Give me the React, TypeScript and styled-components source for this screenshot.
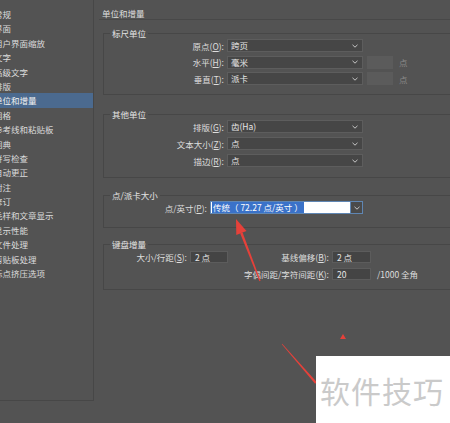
import React, { FC } from "react";
import styled, { createGlobalStyle } from "styled-components";

const GlobalStyle = createGlobalStyle`
  html, body {
    margin: 0;
    padding: 0;
    background: #535353;
  }
  body {
    font-family: "Noto Sans CJK SC", "Noto Sans", sans-serif;
  }
`;

const Page = styled.div`
  position: relative;
  display: flex;
  width: 450px;
  height: 423px;
  overflow: hidden;
  background: #535353;
  color: #dedede;
  font-size: 8.5px;
`;

const Sidebar = styled.div`
  width: 94px;
  height: 401px;
  padding-top: 7px;
  box-sizing: border-box;
  border-right: 1px solid #474747;
  border-bottom: 1px solid #474747;
  overflow: hidden;
  flex-shrink: 0;
`;

const SidebarItem = styled.div<{ $active?: boolean }>`
  height: 14.4px;
  line-height: 14.4px;
  white-space: nowrap;
  background: ${({ $active }) => ($active ? "#4b6a8f" : "transparent")};
  color: ${({ $active }) => ($active ? "#f2f2f2" : "#dcdcdc")};
  span {
    margin-left: -6px;
  }
`;

const Main = styled.div`
  flex: 1;
  padding-left: 5px;
  overflow: hidden;
`;

const Header = styled.div`
  padding: 7px 0 0 3px;
  line-height: 12px;
  height: 12px;
  border-bottom: 1px solid #484848;
  margin-right: -20px;
`;

const Group = styled.fieldset<{ $top: number; $bottom: number; $pt?: number }>`
  margin: ${({ $top }) => $top}px -20px 0 4px;
  padding: ${({ $pt }) => $pt ?? 1}px 0 ${({ $bottom }) => $bottom}px 0;
  border: 1px solid #474747;
  min-width: 0;
`;

const Legend = styled.legend`
  margin-left: 6px;
  padding: 0 2px;
  line-height: 10px;
  color: #e4e4e4;
`;

const Row = styled.div<{ $labelWidth: number; $gap?: number }>`
  display: flex;
  align-items: center;
  height: 13px;
  margin-bottom: ${({ $gap }) => $gap ?? 4}px;
  &:last-child {
    margin-bottom: 0;
  }
  label {
    width: ${({ $labelWidth }) => $labelWidth}px;
    text-align: right;
    margin-right: 3px;
    white-space: nowrap;
    flex-shrink: 0;
  }
`;

const SelectBox = styled.div<{ $width: number }>`
  display: flex;
  align-items: center;
  justify-content: space-between;
  width: ${({ $width }) => $width}px;
  height: 13px;
  box-sizing: border-box;
  padding: 0 4px 0 3px;
  background: #464646;
  border: 1px solid #5d5d5d;
  color: #e6e6e6;
  line-height: 11px;
`;

const FocusSelect = styled.div<{ $width: number }>`
  display: flex;
  width: ${({ $width }) => $width}px;
  height: 13px;
  box-sizing: border-box;
  border: 1px solid #5f86b3;
`;

const FocusField = styled.div`
  flex: 1;
  background: #ffffff;
  padding-left: 1px;
  display: flex;
  align-items: center;
`;

const Selection = styled.span`
  background: #3a72c9;
  color: #ffffff;
  line-height: 11px;
  padding: 0 1px;
  white-space: pre;
`;

const FocusButton = styled.div`
  width: 11px;
  display: flex;
  align-items: center;
  justify-content: center;
  background: #4a4a4a;
  border-left: 1px solid #5f86b3;
`;

const DisabledBox = styled.div`
  width: 26px;
  height: 13px;
  margin-left: 4px;
  background: #5b5b5b;
`;

const Unit = styled.span<{ $muted?: boolean }>`
  margin-left: ${({ $muted }) => ($muted ? 6 : 3)}px;
  color: ${({ $muted }) => ($muted ? "#8a8a8a" : "#dedede")};
  white-space: nowrap;
`;

const KeyGrid = styled.div`
  display: grid;
  grid-template-columns: 83px 38px 98px 39px auto;
  grid-auto-rows: 12px;
  column-gap: 3px;
  row-gap: 5px;
  align-items: center;
  label {
    text-align: right;
    white-space: nowrap;
  }
`;

const TextInput = styled.div`
  height: 12px;
  box-sizing: border-box;
  padding-left: 4px;
  background: #444444;
  border: 1px solid #5c5c5c;
  line-height: 10px;
  color: #e8e8e8;
`;

const Overlay = styled.svg`
  position: absolute;
  left: 0;
  top: 0;
  width: 450px;
  height: 423px;
  pointer-events: none;
`;

const Watermark = styled.div`
  position: absolute;
  left: 316px;
  top: 356px;
  width: 134px;
  height: 67px;
  background: #ffffff;
  display: flex;
  align-items: center;
  padding-left: 4px;
  box-sizing: border-box;
  color: #cacaca;
  font-size: 30px;
  letter-spacing: 1px;
  white-space: nowrap;
`;

const Chevron: FC = () => (
  <svg width="6" height="4" viewBox="0 0 6 4">
    <polyline points="0.5,0.8 3,3.2 5.5,0.8" fill="none" stroke="#c6c6c6" strokeWidth="1" />
  </svg>
);

const Select: FC<{ value: string; width: number }> = ({ value, width }) => (
  <SelectBox $width={width}>
    <span>{value}</span>
    <Chevron />
  </SelectBox>
);

const Key: FC<{ text: string; k: string }> = ({ text, k }) => (
  <>
    {text}(<u>{k}</u>):
  </>
);

const sections = [
  "常规",
  "界面",
  "用户界面缩放",
  "文字",
  "高级文字",
  "排版",
  "单位和增量",
  "网格",
  "参考线和粘贴板",
  "词典",
  "拼写检查",
  "自动更正",
  "附注",
  "修订",
  "毛样和文章显示",
  "显示性能",
  "文件处理",
  "剪贴板处理",
  "标点挤压选项",
];

export default function App() {
  return (
    <>
      <GlobalStyle />
      <Page>
        <Sidebar>
          {sections.map((name) => (
            <SidebarItem key={name} $active={name === "单位和增量"}>
              <span>{name}</span>
            </SidebarItem>
          ))}
        </Sidebar>
        <Main>
          <Header>单位和增量</Header>

          <Group $top={8} $bottom={9}>
            <Legend>标尺单位</Legend>
            <Row $labelWidth={120} $gap={3.5}>
              <label><Key text="原点" k="O" /></label>
              <Select value="跨页" width={136} />
            </Row>
            <Row $labelWidth={120} $gap={3.5}>
              <label><Key text="水平" k="H" /></label>
              <Select value="毫米" width={136} />
              <DisabledBox />
              <Unit $muted>点</Unit>
            </Row>
            <Row $labelWidth={120}>
              <label><Key text="垂直" k="T" /></label>
              <Select value="派卡" width={136} />
              <DisabledBox />
              <Unit $muted>点</Unit>
            </Row>
          </Group>

          <Group $top={14} $bottom={10}>
            <Legend>其他单位</Legend>
            <Row $labelWidth={120}>
              <label><Key text="排版" k="G" /></label>
              <Select value="齿(Ha)" width={136} />
            </Row>
            <Row $labelWidth={120}>
              <label><Key text="文本大小" k="Z" /></label>
              <Select value="点" width={136} />
            </Row>
            <Row $labelWidth={120}>
              <label><Key text="描边" k="R" /></label>
              <Select value="点" width={136} />
            </Row>
          </Group>

          <Group $top={12} $bottom={13}>
            <Legend>点/派卡大小</Legend>
            <Row $labelWidth={103}>
              <label><Key text="点/英寸" k="P" /></label>
              <FocusSelect $width={153}>
                <FocusField>
                  <Selection>{"传统（ 72.27 点/英寸 ）"}</Selection>
                </FocusField>
                <FocusButton>
                  <Chevron />
                </FocusButton>
              </FocusSelect>
            </Row>
          </Group>

          <Group $top={11} $bottom={9} $pt={2}>
            <Legend>键盘增量</Legend>
            <KeyGrid>
              <label><Key text="大小/行距" k="S" /></label>
              <TextInput>2 点</TextInput>
              <label><Key text="基线偏移" k="B" /></label>
              <TextInput>2 点</TextInput>
              <span />
              <span />
              <span />
              <label><Key text="字偶间距/字符间距" k="K" /></label>
              <TextInput>20</TextInput>
              <Unit>/1000 全角</Unit>
            </KeyGrid>
          </Group>
        </Main>

        <Overlay viewBox="0 0 450 423">
          <polygon points="236,219 246.5,231 236.3,235" fill="#e5413a" />
          <polygon points="242.6,232.5 260.6,280.7 259.4,281.3 240.2,233.5" fill="#e5413a" />
          <polygon points="343,334 346,339 340,339" fill="#e5413a" />
          <polygon points="282.2,343.8 316.9,382.2 315.1,383.8 281.8,344.2" fill="#e5413a" />
        </Overlay>
        <Watermark>软件技巧</Watermark>
      </Page>
    </>
  );
}
